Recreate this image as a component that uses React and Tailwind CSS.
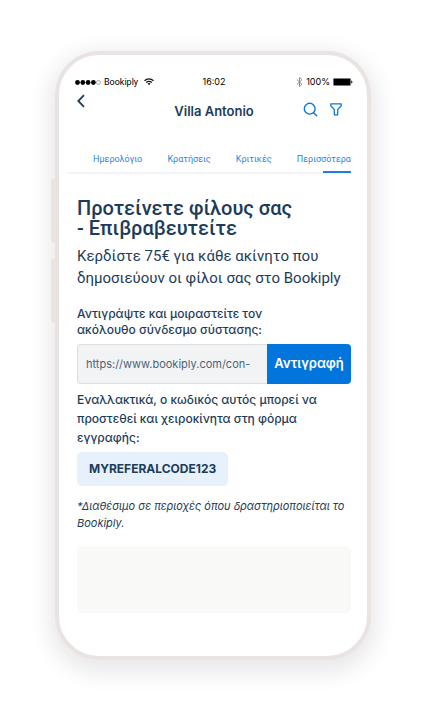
import { useState } from "react";

const TABS = [
  { id: "calendar", label: "Ημερολόγιο" },
  { id: "bookings", label: "Κρατήσεις" },
  { id: "reviews", label: "Κριτικές" },
  { id: "more", label: "Περισσότερα" },
];

const BatteryIcon = () => (
  <svg width="20" height="8" viewBox="0 0 20 8" aria-hidden="true">
    <rect x="0.4" y="0.4" width="17.2" height="7.2" rx="1" fill="#000" stroke="#777" strokeWidth="0.6" />
    <path d="M18.2 2.6c1 .2 1.2.8 1.2 1.4s-.2 1.200-1.200 1.400z" fill="#222" />
  </svg>
);

const WifiIcon = () => (
  <svg width="10" height="8" viewBox="0 0 10 8" fill="none" stroke="#111" strokeWidth="1.200" aria-hidden="true">
    <path d="M0.500 2.700C3.100 0.200 6.900 0.200 9.500 2.700" />
    <path d="M2.200 4.500c1.700-1.500 3.900-1.500 5.600 0" />
    <path d="M3.500 5.600c.9-.8 2.100-.8 3 0L5 7.300z" fill="#111" stroke="none" />
  </svg>
);

const BluetoothIcon = () => (
  <svg width="7" height="10" viewBox="0 0 7 10" fill="none" stroke="#8b9097" strokeWidth="1" aria-hidden="true">
    <path d="M0.800 2.500L6 7.300 3.500 9.500v-9L6 2.700 0.800 7.500" />
  </svg>
);

export default function App() {
  const [activeTab, setActiveTab] = useState("more");
  const link = "https://www.bookiply.com/con-";

  return (
    <div className="min-h-screen bg-white pt-[51px] pb-[51px] pl-[55px] pr-[51px] font-['Inter','Liberation_Sans',sans-serif] text-[#1d3c5a]">
      <div className="relative rounded-[44px] border-4 border-[#e9e4e2] bg-white pb-[43px] shadow-[0_7px_22px_6px_rgba(0,0,0,0.09)]">
        {/* Side buttons */}
        <span className="absolute -left-2 top-[123px] h-[65px] w-1 rounded-l-sm bg-[#e9e4e2]" />
        <span className="absolute -left-2 top-[203px] h-[65px] w-1 rounded-l-sm bg-[#e9e4e2]" />

        {/* Status bar */}
        <div className="grid grid-cols-[1fr_auto_1fr] items-center pt-[21px] pl-4 pr-[14px] text-[9px] leading-3 text-black">
          <div className="flex items-center gap-[3px]">
            <svg width="26" height="5" viewBox="0 0 26 5" aria-hidden="true">
              <circle cx="2.500" cy="2.500" r="2.400" />
              <circle cx="7.800" cy="2.500" r="2.400" />
              <circle cx="13.100" cy="2.500" r="2.400" />
              <circle cx="18.400" cy="2.500" r="2.400" />
              <circle cx="23.500" cy="2.500" r="2" fill="none" stroke="#555" strokeWidth="0.500" />
            </svg>
            <span className="font-['Roboto','Liberation_Sans',sans-serif]">Bookiply</span>
            <span className="ml-[3px]"><WifiIcon /></span>
          </div>
          <span>16:02</span>
          <div className="flex items-center justify-end gap-[3px]">
            <BluetoothIcon />
            <span>100%</span>
            <BatteryIcon />
          </div>
        </div>

        {/* Header */}
        <header className="grid h-[46px] grid-cols-[1fr_auto_1fr] items-center pl-[18px] pr-4">
          <button type="button" aria-label="Πίσω" className="-mt-5 w-3">
            <svg width="8" height="14" viewBox="0 0 8 14" fill="none" stroke="#1d3c5a" strokeWidth="1.800" aria-hidden="true">
              <path d="M7 1.200L1.300 7 7 12.800" />
            </svg>
          </button>
          <h1 className="text-[13px] font-semibold leading-5">Villa Antonio</h1>
          <div className="mr-[9px] flex items-center justify-end gap-3 pb-1">
            <button type="button" aria-label="Αναζήτηση">
              <svg width="15" height="15" viewBox="0 0 15 15" fill="none" stroke="#0a78dd" strokeWidth="1.400" strokeLinecap="round" aria-hidden="true">
                <circle cx="6.700" cy="6.700" r="5.400" />
                <path d="M10.700 10.700l3 3" />
              </svg>
            </button>
            <button type="button" aria-label="Φίλτρα">
              <svg width="12" height="13" viewBox="0 0 12 13" fill="none" stroke="#0a78dd" strokeWidth="1.300" strokeLinejoin="round" aria-hidden="true">
                <path d="M0.800 0.800h10.400v1.900L7.700 6.600v5.200H4.300V6.600L0.800 2.700z" />
              </svg>
            </button>
          </div>
        </header>

        {/* Tabs */}
        <nav className="mt-[11px] ml-[9px] mr-4 flex justify-between border-b-2 border-[#f3f3f4] pl-[25px] font-['Roboto','Liberation_Sans',sans-serif]">
          {TABS.map(({ id, label }) => (
            <button
              key={id}
              type="button"
              onClick={() => setActiveTab(id)}
              className="relative pt-2 pb-[7px] text-[9px] leading-3 text-[#2a86dc]"
            >
              {label}
              {activeTab === id && <span className="absolute right-0 -bottom-px h-[2px] w-7 bg-[#1f80dc]" />}
            </button>
          ))}
        </nav>

        <main className="pt-6 pl-[18px] pr-4">
          <h2 className="font-['Roboto','Liberation_Sans',sans-serif] text-[20px] font-medium leading-5">
            Προτείνετε φίλους σας
            <br />- Επιβραβευτείτε
          </h2>
          <p className="mt-[7px] font-['Roboto','Liberation_Sans',sans-serif] text-[15px] leading-[22px]">
            Κερδίστε 75€ για κάθε ακίνητο που
            <br />
            δημοσιεύουν οι φίλοι σας στο Bookiply
          </p>

          {/* Referral link */}
          <label htmlFor="referral-link" className="mt-[17px] block text-[12px] font-medium leading-4">
            Αντιγράψτε και μοιραστείτε τον
            <br />
            ακόλουθο σύνδεσμο σύστασης:
          </label>
          <div className="mt-[6px] flex h-10">
            <input
              id="referral-link"
              readOnly
              value={link}
              className="min-w-0 flex-1 rounded-l border border-r-0 border-[#dfdfe1] bg-[#f2f3f5] px-2 text-[11px] text-[#4d6379] outline-none"
            />
            <button
              type="button"
              onClick={() => navigator.clipboard?.writeText(link)}
              className="w-[84px] rounded-r bg-[#0275dd] text-[13px] font-semibold text-white"
            >
              Αντιγραφή
            </button>
          </div>

          {/* Referral code */}
          <p className="mt-[6px] text-[12px] font-medium leading-[19px]">
            Εναλλακτικά, ο κωδικός αυτός μπορεί να
            <br />
            προστεθεί και χειροκίνητα στη φόρμα
            <br />
            εγγραφής:
          </p>
          <div className="mt-[5px] inline-block rounded-[5px] bg-[#e6f1fc] px-3 py-[9px] text-[12px] font-bold leading-4">
            MYREFERALCODE123
          </div>

          <p className="mt-3 text-[11px] italic leading-[17px]">
            *Διαθέσιμο σε περιοχές όπου δραστηριοποιείται το
            <br />
            Bookiply.
          </p>
          <div className="mt-[14px] h-[67px] rounded-[5px] bg-[#f9f9f8]" />
        </main>
      </div>
    </div>
  );
}
